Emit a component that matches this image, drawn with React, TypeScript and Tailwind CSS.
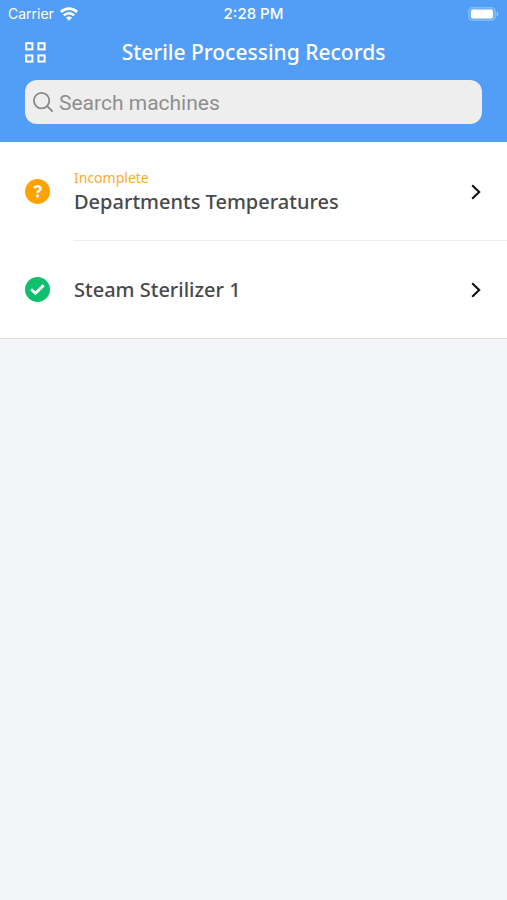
import React, { useState } from "react";

type Machine = {
  name: string;
  status: "incomplete" | "complete";
};

const machines: Machine[] = [
  { name: "Departments Temperatures", status: "incomplete" },
  { name: "Steam Sterilizer 1", status: "complete" },
];

const WifiIcon = () => (
  <svg viewBox="0 0 18 14" className="w-[18px] h-[14px]" fill="none" stroke="currentColor" strokeWidth="2.7">
    <path d="M0.9 5C5.4 0.5 12.6 0.5 17.1 5" />
    <path d="M3.9 8.4C6.8 5.5 11.2 5.5 14.1 8.4" />
    <path d="M9 13.8L6 10.8C7.7 9.2 10.3 9.2 12 10.8Z" fill="currentColor" stroke="none" />
  </svg>
);

const BatteryIcon = () => (
  <svg viewBox="0 0 31 14" className="w-[31px] h-[14px]">
    <rect x="0.5" y="0.5" width="27" height="13" rx="4" fill="#6fb0f8" stroke="#84bafa" />
    <rect x="3" y="2.5" width="22" height="9" rx="2" fill="#fff" />
    <path d="M28.7 4.6C30.9 5.6 30.9 8.4 28.7 9.4Z" fill="#9cc8fb" />
  </svg>
);

const GridIcon = () => (
  <svg viewBox="0 0 21 21" className="w-[21px] h-[21px]" fill="none" stroke="currentColor" strokeWidth="2">
    <rect x="1.2" y="1.2" width="6.2" height="6.2" />
    <rect x="13.4" y="1.2" width="6.2" height="6.2" />
    <rect x="1.2" y="13.4" width="6.2" height="6.2" />
    <rect x="13.4" y="13.4" width="6.2" height="6.2" />
  </svg>
);

const SearchIcon = () => (
  <svg viewBox="0 0 20 20" className="w-5 h-5 shrink-0" fill="none" stroke="currentColor" strokeWidth="1.8" strokeLinecap="round">
    <circle cx="8.6" cy="8.6" r="7.7" />
    <path d="M14.2 14.2L19 19" />
  </svg>
);

const StatusIcon = ({ status }: { status: Machine["status"] }) => (
  <svg viewBox="0 0 24 24" className="w-[25px] h-[25px] shrink-0" fill="none">
    <circle cx="12" cy="12" r="12" fill={status === "complete" ? "#0fbf6d" : "#ffa200"} />
    {status === "complete" ? (
      <path d="M5.8 11.8L10.1 15.7L17.9 8" stroke="#fff" strokeWidth="2.8" />
    ) : (
      <>
        <path d="M9 9C9.8 6.3 15 6.3 14.9 9.3C14.9 11.3 12 11.2 12 13.5" stroke="#fff" strokeWidth="2.5" />
        <circle cx="12" cy="16.2" r="1.5" fill="#fff" />
      </>
    )}
  </svg>
);

const ChevronIcon = () => (
  <svg viewBox="0 0 10 16" className="w-[10px] h-4 shrink-0" fill="none" stroke="#111" strokeWidth="2.1">
    <path d="M1.2 1.2L8.2 8L1.2 14.8" />
  </svg>
);

const App = () => {
  const [query, setQuery] = useState("");

  const visible = machines.filter((machine) =>
    machine.name.toLowerCase().includes(query.toLowerCase())
  );

  return (
    <div className="min-h-screen bg-[#f3f5f8] font-['Noto_Sans',sans-serif]">
      <header className="bg-[#529ef6] text-white pb-[18px]">
        <div className="grid grid-cols-3 items-center h-7 px-2 font-['Inter',sans-serif]">
          <div className="flex items-center gap-1.5 text-sm">
            <span>Carrier</span>
            <WifiIcon />
          </div>
          <span className="text-center text-[15px] font-medium">2:28 PM</span>
          <div className="flex justify-end">
            <BatteryIcon />
          </div>
        </div>
        <div className="grid grid-cols-[24px_1fr_24px] items-center h-12 px-[25px]">
          <button aria-label="Menu" className="cursor-pointer">
            <GridIcon />
          </button>
          <h1 className="pt-0.5 text-center text-[21px] font-medium">Sterile Processing Records</h1>
        </div>
        <label className="flex items-center gap-1.5 h-11 mt-1 mx-[25px] px-2 rounded-xl bg-[#eeeeee] text-[#88898b]">
          <SearchIcon />
          <input
            type="text"
            aria-label="Search machines"
            placeholder="Search machines"
            value={query}
            onChange={(e) => setQuery(e.target.value)}
            className="w-full pt-1 bg-transparent outline-none text-[21px] text-neutral-800 placeholder:text-[#8e8e90] font-['Roboto',sans-serif]"
          />
        </label>
      </header>
      <ul className="bg-white border-b border-[#dddfe1]">
        {visible.map((machine) => (
          <li key={machine.name} className="group">
            <a href="#" className="flex items-center gap-6 pl-[25px]">
              <StatusIcon status={machine.status} />
              <div className="flex flex-1 items-center justify-between h-[98px] pr-[26px] border-t border-[#eeeeee] group-first:border-transparent">
                <div>
                  {machine.status === "incomplete" && (
                    <p className="text-sm text-[#ffab2a]">Incomplete</p>
                  )}
                  <h2 className="text-xl font-medium text-[#48494c]">{machine.name}</h2>
                </div>
                <ChevronIcon />
              </div>
            </a>
          </li>
        ))}
      </ul>
    </div>
  );
};

export default App;
